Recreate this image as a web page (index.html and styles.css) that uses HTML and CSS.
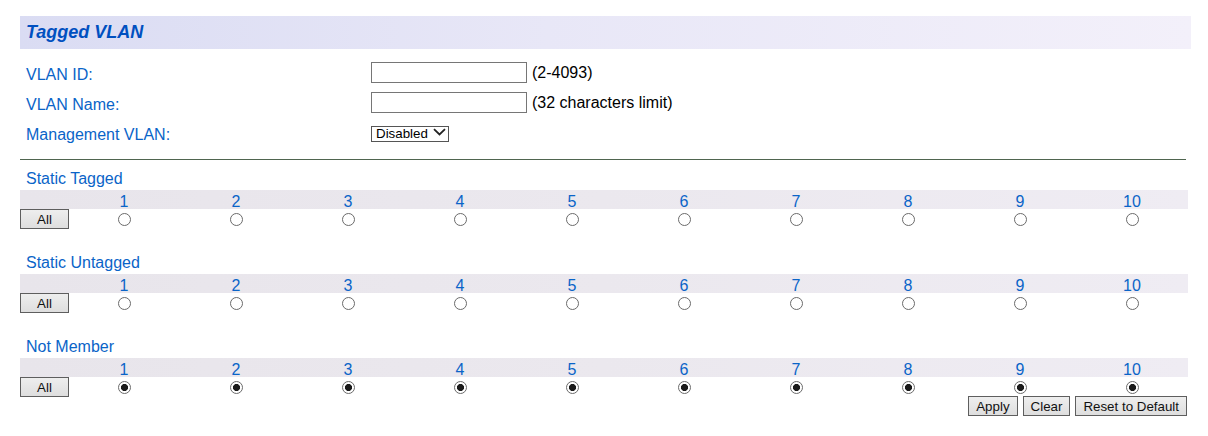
FILE: index.html
```html
<!DOCTYPE html>
<html>
<head>
  <title>Tagged VLAN</title>
  <link rel="stylesheet" href="styles.css">
</head>
<body>
  <div class="page">
    <div class="title-bar">Tagged VLAN</div>

    <form class="vlan-form" id="vlanForm">
      <label class="field-label" for="vlanId">VLAN ID:</label>
      <div class="field">
        <input type="text" id="vlanId" class="text-input">
        <span class="hint">(2-4093)</span>
      </div>

      <label class="field-label" for="vlanName">VLAN Name:</label>
      <div class="field">
        <input type="text" id="vlanName" class="text-input">
        <span class="hint">(32 characters limit)</span>
      </div>

      <label class="field-label" for="mgmtVlan">Management VLAN:</label>
      <div class="field">
        <span class="select-wrap">
          <select id="mgmtVlan" class="select-input">
            <option>Disabled</option>
            <option>Enabled</option>
          </select>
          <svg class="chevron" width="13" height="8" viewBox="0 0 13 8">
            <path d="M1 1.2 L6.5 6.5 L12 1.2" fill="none" stroke="#222" stroke-width="1.8"/>
          </svg>
        </span>
      </div>
    </form>

    <hr class="divider">

    <div id="portSections"></div>

    <div class="actions">
      <button type="button" class="btn">Apply</button>
      <button type="button" class="btn">Clear</button>
      <button type="button" class="btn">Reset to Default</button>
    </div>
  </div>

  <script>
    const sections = [
      { name: "tagged", title: "Static Tagged" },
      { name: "untagged", title: "Static Untagged" },
      { name: "none", title: "Not Member" },
    ];
    const portCount = 10;
    const portSections = document.querySelector("#portSections");

    sections.forEach((section) => {
      let numbers = '<div class="port-cell"></div>';
      let radios = '<div class="port-cell"><button type="button" class="btn btn-all" data-group="' + section.name + '">All</button></div>';

      for (let i = 1; i <= portCount; i++) {
        const checked = section.name === "none" ? " checked" : "";
        numbers += '<div class="port-cell port-num">' + i + "</div>";
        radios += '<div class="port-cell"><input type="radio" class="port-radio" name="port' + i + '" value="' + section.name + '"' + checked + "></div>";
      }

      portSections.innerHTML +=
        '<div class="port-section">' +
        '<div class="section-title">' + section.title + "</div>" +
        '<div class="port-row port-head">' + numbers + "</div>" +
        '<div class="port-row">' + radios + "</div>" +
        "</div>";
    });

    portSections.addEventListener("click", (event) => {
      const group = event.target.dataset.group;
      if (!group) return;
      document.querySelectorAll('.port-radio[value="' + group + '"]').forEach((radio) => {
        radio.checked = true;
      });
    });
  </script>
</body>
</html>
```

FILE: styles.css
```css
body {
  margin: 0;
  padding: 0;
  background-color: #ffffff;
  font-family: "Liberation Sans", Arial, sans-serif;
}

.page {
  padding: 16px 0 0 20px;
  width: 1171px;
}

.title-bar {
  height: 33px;
  line-height: 33px;
  padding-left: 6px;
  font-size: 18px;
  font-weight: bold;
  font-style: italic;
  color: #0050c0;
  background: linear-gradient(to right, #dadcf3, #e8e7f7 45%, #f3f0fa);
}

.vlan-form {
  display: grid;
  grid-template-columns: 351px auto;
  grid-auto-rows: 30px;
  align-items: center;
  margin-top: 8px;
}

.field-label {
  padding: 6px 0 0 6px;
  font-size: 16px;
  color: #0a64c8;
}

.field {
  display: flex;
  align-items: center;
}

.text-input {
  box-sizing: border-box;
  width: 156px;
  height: 21px;
  margin: 0;
  border: 1px solid #767676;
  padding: 0 3px;
  font-family: inherit;
}

.hint {
  margin-left: 5px;
  padding-top: 1px;
  font-size: 16px;
  color: #000000;
}

.select-wrap {
  position: relative;
  display: inline-block;
  margin-top: 2px;
}

.select-input {
  appearance: none;
  box-sizing: border-box;
  width: 78px;
  height: 16px;
  margin: 0;
  padding: 0 0 0 4px;
  border: 1px solid #555555;
  border-radius: 0;
  background: #ffffff;
  font-family: inherit;
  font-size: 13.33px;
  line-height: 14px;
  color: #000000;
}

.chevron {
  position: absolute;
  right: 3px;
  top: 4px;
  pointer-events: none;
}

.divider {
  width: 1166px;
  margin: 12px 0 0 0;
  border: none;
  border-top: 1px solid #4f654f;
}

.port-section {
  width: 1168px;
  margin-bottom: 15px;
}

.section-title {
  height: 30px;
  box-sizing: border-box;
  padding: 10px 0 0 6px;
  line-height: 18px;
  font-size: 16px;
  color: #0a64c8;
}

.port-row {
  display: grid;
  grid-template-columns: 48px repeat(10, 1fr);
  height: 20px;
  align-items: center;
}

.port-head {
  height: 19px;
  background: linear-gradient(to right, #e8e5eb, #ebe8ee 50%, #efecf3);
}

.port-cell {
  display: flex;
  justify-content: center;
  align-items: center;
}

.port-cell:first-child {
  justify-content: flex-start;
}

.port-num {
  line-height: 19px;
  padding-top: 2px;
  font-size: 16px;
  color: #0a64c8;
}

.port-radio {
  appearance: none;
  width: 13px;
  height: 13px;
  margin: 0;
  border: 1px solid #6b6b6b;
  border-radius: 50%;
  background: #ffffff;
}

.port-radio:checked {
  background: radial-gradient(circle, #1a1a1a 0 3.3px, #ffffff 3.8px);
}

.btn {
  box-sizing: border-box;
  height: 20px;
  margin: 0;
  padding: 0 7px;
  border: 1px solid #5e5e5e;
  border-radius: 0;
  background: linear-gradient(#eeeeee, #dedede);
  font-family: inherit;
  font-size: 13.33px;
  color: #111111;
  cursor: pointer;
}

.btn-all {
  width: 49px;
  flex-shrink: 0;
}

.actions {
  display: flex;
  justify-content: flex-end;
  gap: 5px;
  width: 1167px;
  margin-top: -16px;
}
```
